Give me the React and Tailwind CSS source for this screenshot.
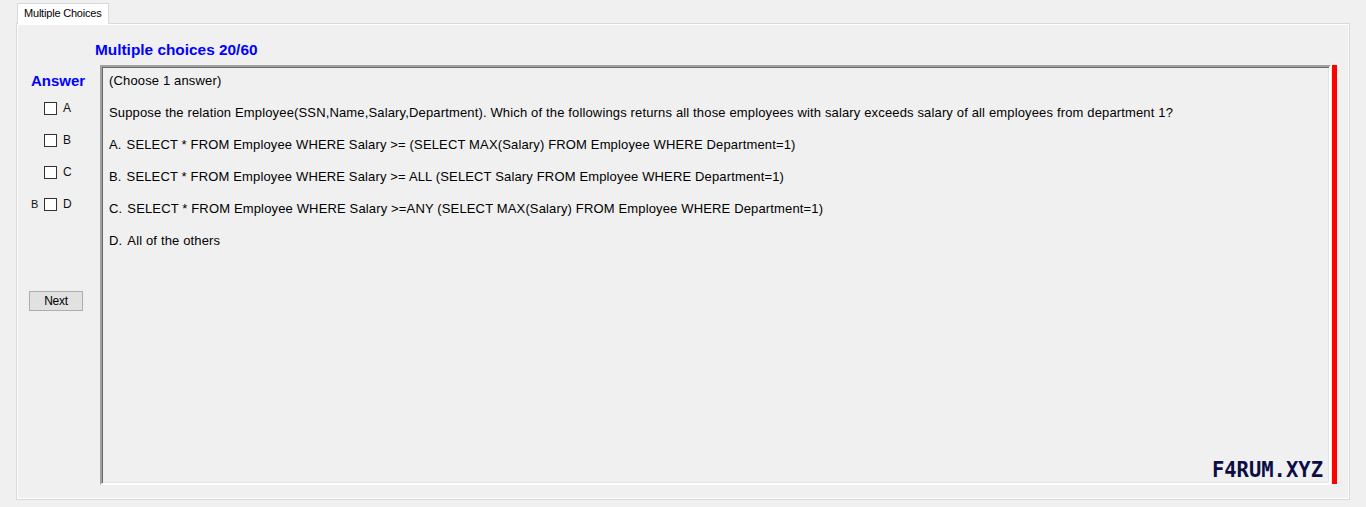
export default function App() {
  const lines = [
    [null, "(Choose 1 answer)"],
    [null, "Suppose the relation Employee(SSN,Name,Salary,Department). Which of the followings returns all those employees with salary exceeds salary of all employees from department 1?"],
    ["A.", "SELECT * FROM Employee WHERE Salary >= (SELECT MAX(Salary) FROM Employee WHERE Department=1)"],
    ["B.", "SELECT * FROM Employee WHERE Salary >= ALL (SELECT Salary FROM Employee WHERE Department=1)"],
    ["C.", "SELECT * FROM Employee WHERE Salary >=ANY (SELECT MAX(Salary) FROM Employee WHERE Department=1)"],
    ["D.", "All of the others"],
  ];
  const opts = ["A", "B", "C", "D"];
  return (
    <div
      className="w-[1366px] h-[507px] bg-[#f0f0f0] pl-[16px] pt-[3px] overflow-hidden"
      style={{ fontFamily: '"Liberation Sans", Arial, sans-serif' }}
    >
      <div className="ml-[1px] w-[92px] h-[21px] border border-b-0 border-[#d9d9d9] bg-white relative z-10 text-[11px] leading-[19px] pl-[6px] text-black tracking-[-0.2px]">
        Multiple Choices
      </div>
      <div className="-mt-[1px] w-[1334px] h-[477px] border border-[#d9d9d9] shadow-[inset_1px_1px_0_#ffffff,inset_-1px_-1px_0_#ffffff] flex flex-col">
        <div className="pl-[78px] pt-[17px] h-[41px] text-[15.4px] leading-[18px] font-bold text-[#0000ff]">
          Multiple choices 20/60
        </div>
        <div className="flex">
          <div className="w-[83px] flex flex-col">
            <div className="pl-[14px] mt-[7px] text-[15px] leading-[18px] font-bold text-[#0000ff]">
              Answer
            </div>
            <div className="mt-[2px] flex flex-col">
              {opts.map((o) => (
                <div key={o} className="h-[32px] flex items-center pl-[14px]">
                  <div className="w-[13px] text-[11px] leading-none text-[#111]">
                    {o === "D" ? "B" : ""}
                  </div>
                  <div className="w-[13px] h-[13px] border border-[#333333] bg-white" />
                  <div className="ml-[6px] text-[12px] leading-none text-[#111]">{o}</div>
                </div>
              ))}
            </div>
            <button className="mt-[71px] ml-[12px] w-[54px] h-[20px] border border-[#adadad] bg-[#e1e1e1] text-[12px] leading-none text-black tracking-[-0.3px]">
              Next
            </button>
          </div>
          <div className="relative w-[1231px] h-[420px] border-2 border-t-[#a0a0a0] border-l-[#a0a0a0] border-b-white border-r-white shadow-[inset_1px_1px_0_#696969,inset_-1px_-1px_0_#e3e3e3] pl-[7px] pt-[6px] flex flex-col gap-[16px]">
            {lines.map(([k, t], i) => (
              <div key={i} className="flex text-[13px] leading-[16px] text-black whitespace-nowrap tracking-[0.15px]">
                {k && <span>{k}</span>}
                <span className={k ? "ml-[5px]" : ""}>{t}</span>
              </div>
            ))}
            <div
              className="absolute right-[6px] top-[393px] text-[20.5px] leading-none font-bold text-[#0d0d45]"
              style={{ fontFamily: '"DejaVu Sans Mono", monospace' }}
            >
              F4RUM.XYZ
            </div>
          </div>
          <div className="ml-[1px] w-[5px] h-[419px] bg-[#ff0000]" />
        </div>
      </div>
    </div>
  );
}
